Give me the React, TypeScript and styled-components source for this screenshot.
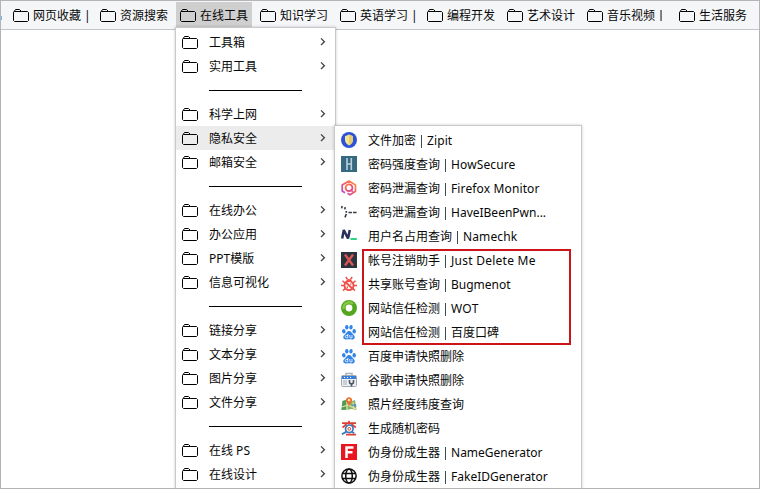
import React from 'react';
import styled, { createGlobalStyle } from 'styled-components';

const GlobalStyle = createGlobalStyle`
  *, *::before, *::after { box-sizing: border-box; }
  body { margin: 0; background: #fff; overflow: hidden; }
`;

const Window = styled.div`
  position: relative;
  width: 760px;
  height: 489px;
  overflow: hidden;
  background: #fff;
  border: 1px solid #b4b4b8;
  color: #080808;
  font: 12px/24px 'Noto Sans', 'Noto Sans CJK SC', sans-serif;
  white-space: pre;
`;

const BookmarkBar = styled.nav`
  display: flex;
  align-items: stretch;
  gap: 4px;
  height: 29px;
  padding: 1px 0 2px 8px;
  background: #f5f6f8;
  border-bottom: 1px solid #c4c5c9;
`;

const Bookmark = styled.div<{ $width: number; $open?: boolean }>`
  display: flex;
  align-items: center;
  flex: none;
  gap: 4px;
  width: ${(p) => p.$width}px;
  padding: 2px 4px 0;
  background: ${(p) => (p.$open ? '#cfcfcf' : 'transparent')};
  svg { flex: none; }
`;

const ClippedIcon = styled.i`
  position: absolute;
  left: 0;
  top: 15px;
  width: 1px;
  height: 4px;
  background: #73b7e6;
`;

const Menu = styled.div`
  position: absolute;
  top: 26px;
  left: 174px;
  width: 161px;
  height: 480px;
  padding-top: 2px;
  background: #fff;
  border: 1px solid #c9c9cb;
  box-shadow: 0 0 3px rgba(0, 0, 0, 0.2);
`;

const SubMenu = styled(Menu)`
  top: 124px;
  left: 333px;
  width: 248px;
  height: 380px;
`;

const MenuRow = styled.div<{ $active?: boolean }>`
  display: flex;
  align-items: center;
  height: 24px;
  padding: 0 9px 0 6px;
  background: ${(p) => (p.$active ? '#ececec' : 'transparent')};
  svg { flex: none; }
`;

const MenuLabel = styled.span`
  flex: 1;
  margin-left: 11px;
  padding-top: 2px;
`;

const Divider = styled.div`
  height: 24px;
  padding: 12px 33px 0;
  &::before {
    content: '';
    display: block;
    width: 93px;
    border-top: 1px solid #000;
  }
`;

const SiteRow = styled.div`
  display: flex;
  align-items: center;
  height: 24px;
  padding-left: 6px;
  svg { flex: none; margin-right: 11px; }
`;

const SiteName = styled.span`
  padding-top: 2px;
`;

const Pipe = styled.i`
  width: 1px;
  height: 13px;
  margin: 2px 5px 0;
  background: #3c4c4c;
`;

const Latin = styled.span<{ $spacing?: number }>`
  padding-top: 2px;
  letter-spacing: ${(p) => p.$spacing ?? 0}px;
`;

const Highlight = styled.div`
  position: absolute;
  left: 361px;
  top: 248px;
  width: 209px;
  height: 96px;
  border: 2px solid #cc1518;
`;

const Folder = () => (
  <svg width="16" height="13" viewBox="0 0 16 13" fill="none" stroke="#000">
    <path d="M.5 3.5 2.5 .5H6.5L8.5 2.5H14.5L15.5 3.5V11.5L14.5 12.5H1.5L.5 11.5V3.5L1.5 2.5H8.5" />
  </svg>
);

const Chevron = () => (
  <svg width="6" height="8" viewBox="0 0 6 8" fill="none" stroke="#444" strokeWidth="1.3">
    <path d="M1 .4 4.4 3.7 1 7" />
  </svg>
);

const Icon = ({ children }: { children: React.ReactNode }) => (
  <svg width="16" height="16" viewBox="0 0 16 16" fill="none">{children}</svg>
);

const Shield = () => (
  <Icon>
    <circle cx="8" cy="8" r="8" fill="#2c52d8" />
    <path d="M8 2.5 12 4.2V8q0 3.2-4 5.5Q4 11.2 4 8V4.2Z" fill="#f7e394" />
    <path d="M8 2.5 12 4.2V8q0 3.2-4 5.5Z" fill="#e8cd70" />
  </Icon>
);

const HowSecure = () => (
  <Icon>
    <path fill="#376881" d="M0 0h16v16H0z" />
    <path d="M6 2v12M10.3 2v12M5.5 8h5" stroke="#b9d2db" strokeWidth="1.6" />
  </Icon>
);

const Monitor = () => (
  <Icon>
    <defs>
      <linearGradient id="hex" x1="0" y1="0" x2="1" y2="1">
        <stop offset="0" stopColor="#ff8a3c" />
        <stop offset=".5" stopColor="#f4485e" />
        <stop offset="1" stopColor="#d044a8" />
      </linearGradient>
      <linearGradient id="hexEdge" x1="1" y1="0" x2="0" y2="1">
        <stop offset="0" stopColor="#ff9a40" />
        <stop offset=".5" stopColor="#f4566a" />
        <stop offset="1" stopColor="#a14be2" />
      </linearGradient>
    </defs>
    <path d="M4 12.8 1.2 11V5L8 1l6.5 4v6.3L9 14.8 6.5 13.3" stroke="url(#hexEdge)" strokeWidth="1.7" strokeLinejoin="round" />
    <circle cx="8" cy="7.8" r="3.4" stroke="url(#hex)" strokeWidth="1.8" />
    <path d="m9.5 9.5 2.3 2.3" stroke="#e64a83" strokeWidth="1.6" />
  </Icon>
);

const Pwned = () => (
  <Icon>
    <path d="M1.2 2 .6 4.4M4.2 3.2 3.8 5.4M5.3 7v1.8M5.3 10 4 13.4M7.5 8.5h3.4M12 8.5h3.6" stroke="#343a44" strokeWidth="1.6" />
  </Icon>
);

const Namechk = () => (
  <Icon>
    <path d="M1.2 10.5 2.8 2 7 10.5 8.8 2" stroke="#292e5b" strokeWidth="2.5" strokeLinejoin="bevel" />
    <path d="M9.5 11h6.3" stroke="#29d484" strokeWidth="2" />
  </Icon>
);

const DeleteMe = () => (
  <Icon>
    <path fill="#2b343d" d="M0 0h16v16H0z" />
    <path d="m4 2.5 8 11M12 2.5l-8 11" stroke="#dd5552" strokeWidth="2.3" />
  </Icon>
);

const Bug = () => (
  <Icon>
    <path d="M5 5.2Q5.5 3 8 3t3 2.2" fill="#ef5148" />
    <path d="M4.8 1 6.5 3.4M11.2 1 9.5 3.4M0 9.5h3.5M12.5 9.5H16M1.5 4.8 4 7M14.5 4.8 12 7M2 14.6l2.5-2.4M14 14.6l-2.5-2.4" stroke="#ef5148" strokeWidth="1.5" />
    <circle cx="8" cy="9.6" r="4.5" fill="#fff" stroke="#ef5148" strokeWidth="1.9" />
    <path d="m4.2 5.8 7.8 7.4" stroke="#ef5148" strokeWidth="2" />
    <path d="M9.8 7.2v1.5M6.3 10.3v2" stroke="#ef5148" strokeWidth="1.3" />
  </Icon>
);

const Wot = () => (
  <Icon>
    <circle cx="8" cy="8" r="5.7" stroke="#53a51d" strokeWidth="4.6" />
    <path d="M2.7 9A5.5 5.5 0 0 1 12 4" stroke="#83c946" strokeWidth="2.3" />
  </Icon>
);

const Paw = () => (
  <Icon>
    <g fill="#3384e8">
      <ellipse cx="2.8" cy="7.3" rx="1.8" ry="2.2" transform="rotate(-15 2.8 7.3)" />
      <ellipse cx="5.8" cy="3.3" rx="1.7" ry="2.3" />
      <ellipse cx="10" cy="3.3" rx="1.7" ry="2.3" transform="rotate(10 10 3.3)" />
      <ellipse cx="13.2" cy="7.2" rx="1.7" ry="2.2" />
      <path d="M8 7c2 0 2.6 2 4.3 3.5 3 2.8.8 5.4-1.6 5-1.8-.4-3.6-.4-5.2 0-3 .5-4.4-2.2-2-4.4C5.3 9.6 5.8 7 8 7Z" />
    </g>
    <path d="M6.8 10v3.8H5.4c-1.6 0-1.6-2.3 0-2.3h1.4M8.8 11v2c0 .7.3.9 1 .9H11V11" stroke="#fff" strokeWidth=".8" />
  </Icon>
);

const Toolbox = () => (
  <Icon>
    <path d="M5 3V1.5h6V3" stroke="#aab2be" strokeWidth="1.5" />
    <rect x=".5" y="3.5" width="15" height="11" rx="1" fill="#edf1f5" stroke="#a2a9b3" />
    <path fill="#397edb" d="M1 4h14v3H1z" />
    <path d="M3 5.5h1M6 5.5h1M9 5.5h1" stroke="#fff" />
    <path fill="#cad0d8" d="M2 8h4v5H2z" />
    <path d="M8.5 8v2q0 1.8 2 1.8t2-1.8V8M10.5 12v2.5" stroke="#4d5661" strokeWidth="1.6" />
  </Icon>
);

const MapPin = () => (
  <Icon>
    <path fill="#83b56b" d="m1.5 5 4.5-1 5 1 3-1 1.5 10-5-1-5 1H.5Z" />
    <path fill="#4b9d57" d="m1.5 5 3.5-1v9l-4.5 1Z" />
    <path d="m1 11 6-2 8 4M6 5v9M12 6l1 8" stroke="#e4dda0" strokeWidth="1.2" />
    <path fill="#5292c4" d="m10 9 5-1 .5 3Z" />
    <path d="M8 10 5 5c-1.2-5 7.2-5 6 0Z" fill="#ef6c2e" />
    <circle cx="8" cy="4" r="1.3" fill="#ffe4ae" />
  </Icon>
);

const Lookup = () => (
  <Icon>
    <path d="M1 3.2h14M8 .8v3.4M5.5 4 1.5 7.6M10.5 4l4.3 3.6M5 14.6h10" stroke="#df4035" strokeWidth="1.7" />
    <circle cx="8.3" cy="8.8" r="3.8" fill="#fff" stroke="#3977b6" strokeWidth="1.7" />
    <circle cx="8.3" cy="8.8" r="1.4" stroke="#df4035" />
    <path d="M5.6 11.6.8 14.2M10.8 11.6l2.4 1.8" stroke="#3977b6" strokeWidth="1.8" />
  </Icon>
);

const NameGenerator = () => (
  <Icon>
    <path fill="#e91620" d="M0 0h16v16H0z" />
    <path d="M5.5 14V3.6h7M5.5 8.3h6" stroke="#fff" strokeWidth="2.5" />
  </Icon>
);

const Globe = () => (
  <Icon>
    <g stroke="#111" strokeWidth="1.5">
      <circle cx="8" cy="8" r="7.1" />
      <ellipse cx="8" cy="8" rx="3.3" ry="7.1" />
      <path d="M1.5 5.5h13M1.5 10.5h13" />
    </g>
  </Icon>
);

const bookmarks = [
  { label: '网页收藏 |', width: 83 },
  { label: '资源搜索', width: 76 },
  { label: '在线工具', width: 76, open: true },
  { label: '知识学习', width: 76 },
  { label: '英语学习 |', width: 83 },
  { label: '编程开发', width: 76 },
  { label: '艺术设计', width: 76 },
  { label: '音乐视频丨', width: 88 },
  { label: '生活服务', width: 76 },
];

const folders = [
  '工具箱', '实用工具', null, '科学上网', '隐私安全', '邮箱安全', null,
  '在线办公', '办公应用', 'PPT模版', '信息可视化', null,
  '链接分享', '文本分享', '图片分享', '文件分享', null, '在线 PS', '在线设计',
];

const sites: { icon: React.FC; name: string; site?: string; spacing?: number }[] = [
  { icon: Shield, name: '文件加密', site: 'Zipit', spacing: 0.1 },
  { icon: HowSecure, name: '密码强度查询', site: 'HowSecure', spacing: 0.12 },
  { icon: Monitor, name: '密码泄漏查询', site: 'Firefox Monitor', spacing: 0.13 },
  { icon: Pwned, name: '密码泄漏查询', site: 'HaveIBeenPwn...' },
  { icon: Namechk, name: '用户名占用查询', site: 'Namechk', spacing: 0.12 },
  { icon: DeleteMe, name: '帐号注销助手', site: 'Just Delete Me', spacing: 0.25 },
  { icon: Bug, name: '共享账号查询', site: 'Bugmenot' },
  { icon: Wot, name: '网站信任检测', site: 'WOT', spacing: 0.3 },
  { icon: Paw, name: '网站信任检测', site: '百度口碑' },
  { icon: Paw, name: '百度申请快照删除' },
  { icon: Toolbox, name: '谷歌申请快照删除' },
  { icon: MapPin, name: '照片经度纬度查询' },
  { icon: Lookup, name: '生成随机密码' },
  { icon: NameGenerator, name: '伪身份成生器', site: 'NameGenerator' },
  { icon: Globe, name: '伪身份成生器', site: 'FakeIDGenerator' },
];

export default function App() {
  return (
    <>
      <GlobalStyle />
      <Window>
        <BookmarkBar>
          {bookmarks.map((b) => (
            <Bookmark key={b.label} $width={b.width} $open={b.open}>
              <Folder />
              <span>{b.label}</span>
            </Bookmark>
          ))}
        </BookmarkBar>
        <ClippedIcon />
        <Menu>
          {folders.map((label, i) =>
            label ? (
              <MenuRow key={i} $active={label === '隐私安全'}>
                <Folder />
                <MenuLabel>{label}</MenuLabel>
                <Chevron />
              </MenuRow>
            ) : (
              <Divider key={i} />
            ),
          )}
        </Menu>
        <SubMenu>
          {sites.map(({ icon: SiteIcon, name, site, spacing }, i) => (
            <SiteRow key={i}>
              <SiteIcon />
              <SiteName>{name}</SiteName>
              {site && (
                <>
                  <Pipe />
                  <Latin $spacing={spacing}>{site}</Latin>
                </>
              )}
            </SiteRow>
          ))}
        </SubMenu>
        <Highlight />
      </Window>
    </>
  );
}
